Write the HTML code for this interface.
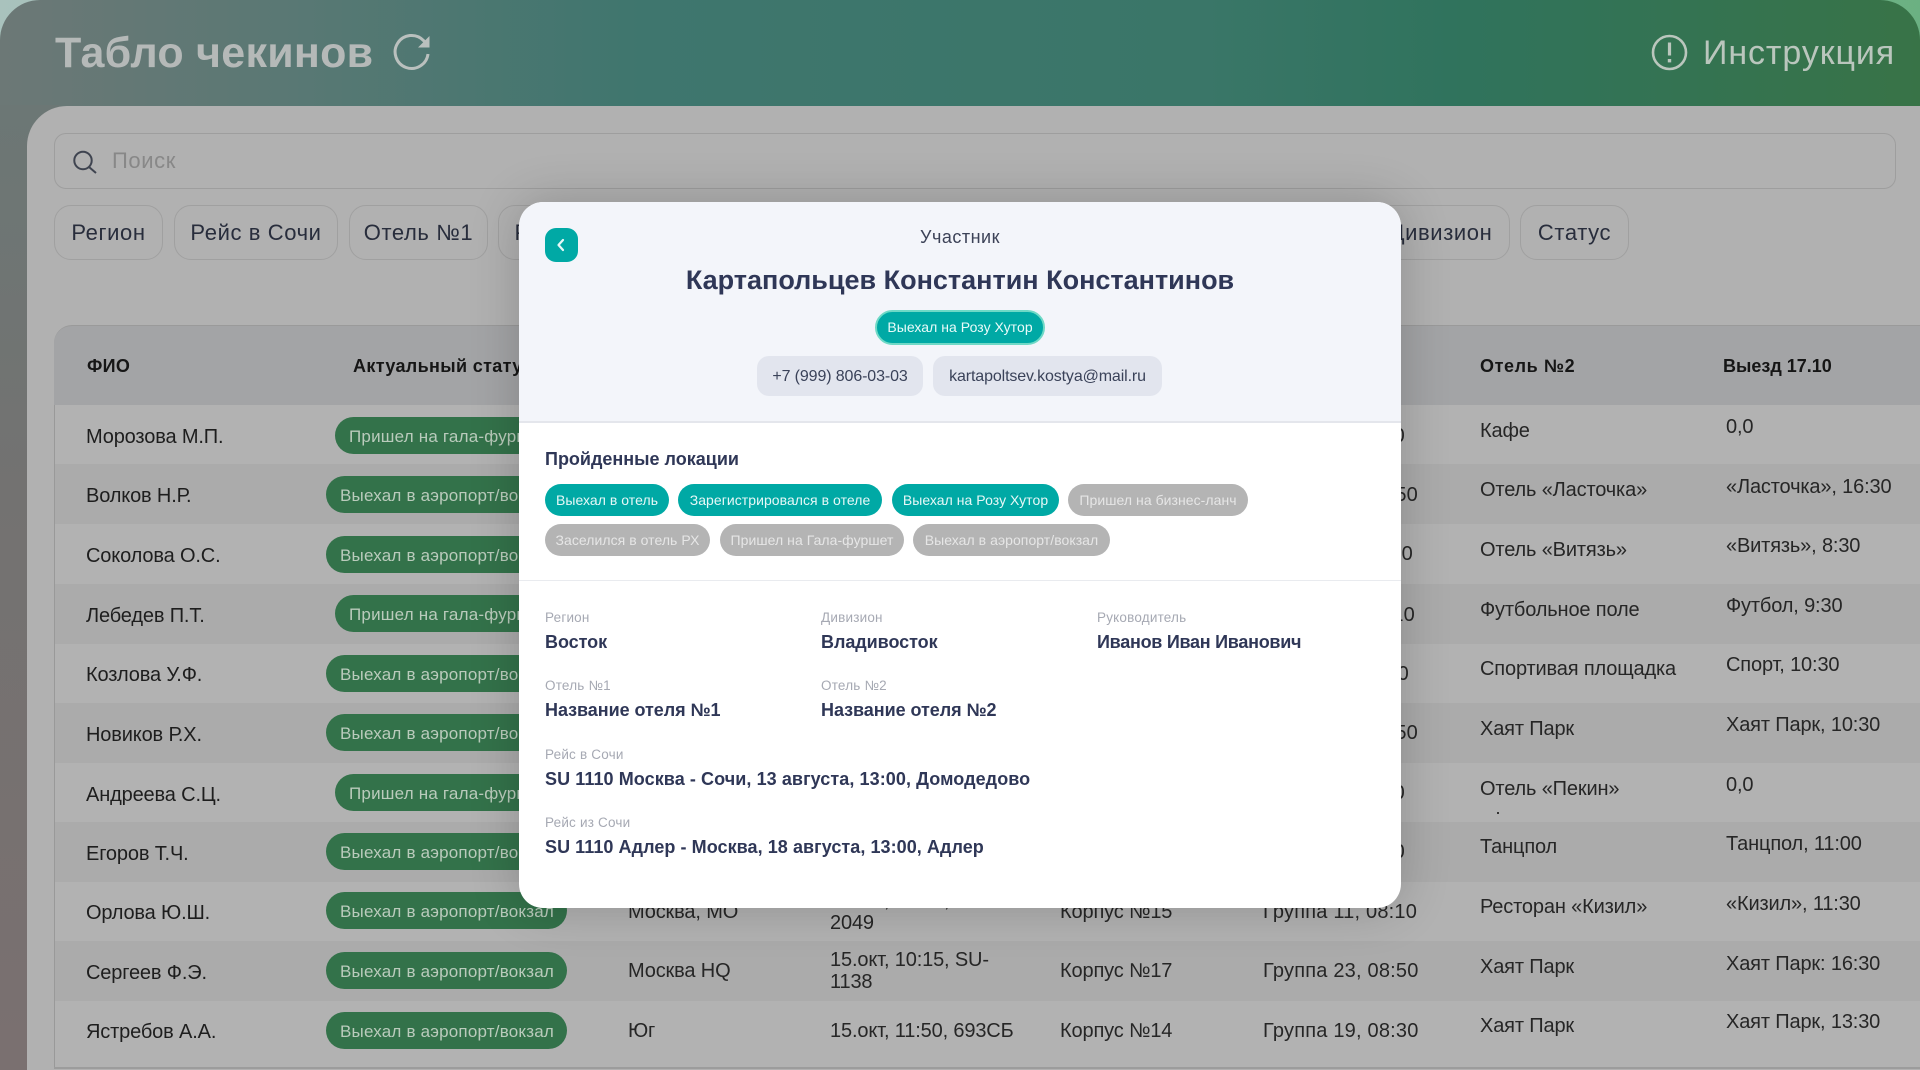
<!DOCTYPE html>
<html lang="ru"><head><meta charset="utf-8"><title>Табло чекинов</title>
<style>
html,body{margin:0;padding:0;width:1920px;height:1070px;overflow:hidden}
body{position:relative;font-family:"Liberation Sans","Noto Sans CJK SC",sans-serif;background:linear-gradient(100deg,#a9c2bd 0,#8fb5ad 30%,#66b07c 100%)}
div,span,svg{position:absolute}
.bgl{left:0;top:0;width:1920px;height:1070px;border-radius:40px 40px 0 0;background:linear-gradient(90deg,#6c7876 0,#5a7874 280px,#3f766e 640px,#3a7668 1200px,#30735d 1450px,#387347 1920px)}
.bgb{left:0;top:105px;width:60px;height:965px;background:linear-gradient(180deg,#6c7775 0,#737271 40%,#7a7070 100%)}
.panel{left:27px;top:106px;width:1893px;height:964px;background:#b1b1b1;border-radius:40px 0 0 0}
.title{left:55px;top:28px;font-size:43px;line-height:50px;font-weight:700;color:#b5b9b8;white-space:nowrap;letter-spacing:.25px}
.ins{left:1703px;top:32px;font-size:34px;line-height:42px;color:#bac6bd;white-space:nowrap;letter-spacing:.9px}
.search{left:54px;top:133px;width:1840px;height:54px;border:1px solid #9e9e9e;border-radius:12px}
.ph{left:112px;top:147px;font-size:22px;line-height:27px;color:#888;letter-spacing:.6px}
.f{top:205px;height:53px;border:1px solid #a0a0a0;border-radius:17px;box-sizing:content-box;font-size:22px;line-height:53px;color:#282d3c;text-align:center;white-space:nowrap;letter-spacing:.6px;overflow:hidden}
.th{left:54px;top:325px;width:1866px;height:81px;background:#a3a4a6;border-radius:18px 0 0 0;border-top:1px solid #9a9a9a;box-sizing:border-box}
.tl{left:54px;top:405px;width:1px;height:663px;background:#999}
.tb{left:54px;top:1067px;width:1866px;height:2px;background:#9c9c9c}
.r{left:55px;width:1865px;height:60px;background:#ababab}
.o2{background:#b2b2b2}
.b{font-size:18px;line-height:22px;font-weight:700;color:#161616;top:355px;white-space:nowrap}
.n,.c{font-size:20px;line-height:24px;color:#1e1e1e;white-space:nowrap;letter-spacing:-.15px}
.c{color:#262626}
.gp{letter-spacing:.2px}
.p{height:37px;border-radius:19px;background:#33724a;color:#bacbbc;font-size:17px;line-height:39px;white-space:nowrap;letter-spacing:.2px;overflow:hidden}
.a{left:326px;width:241px;padding-left:14px;box-sizing:border-box}
.g{left:335px;width:232px;padding-left:14px;box-sizing:border-box}
.ge{text-align:right;width:300px}
.m{left:519px;top:202px;width:882px;height:706px;background:#fff;border-radius:24px;box-shadow:0 0 50px rgba(0,0,0,.2);overflow:hidden}
.mt{left:0;top:0;width:882px;height:219px;background:#f3f5fa;border-bottom:2px solid #e4e6ec}
.ml{left:0;top:378px;width:882px;height:1px;background:#e9ebef}
.back{left:26px;top:26px;width:33px;height:34px;border-radius:11px;background:#00a9a5}
.u{left:0;width:882px;text-align:center;top:24px;font-size:18px;line-height:22px;color:#3c4257;letter-spacing:.5px}
.nm{left:0;width:882px;text-align:center;top:60px;font-size:27px;line-height:36px;font-weight:700;color:#2f3757;white-space:nowrap}
.st{left:356px;top:108px;width:170px;height:35px;box-sizing:border-box;border:2px solid #6fd9c6;border-radius:18px;background:#00a9a5;color:#e8fbf9;font-size:14px;line-height:31px;text-align:center;white-space:nowrap;letter-spacing:.05px}
.ct{top:154px;height:40px;border-radius:12px;background:#e2e5ee;color:#3a4259;font-size:16px;line-height:42px;text-align:center;white-space:nowrap;letter-spacing:-.12px}
.h{left:26px;top:246px;font-size:18px;line-height:22px;font-weight:700;color:#2f3757;white-space:nowrap}
.ch{height:32px;border-radius:16px;font-size:14px;line-height:32px;text-align:center;color:#e6f8f7;background:#00a9a5;white-space:nowrap;letter-spacing:.05px}
.ch.o{background:#b4b4b4;color:#e6e6e6}
.lb{font-size:13.5px;line-height:16px;color:#a6a9b3;white-space:nowrap;letter-spacing:.2px}
.v{font-size:18px;line-height:22px;font-weight:700;color:#2f3757;white-space:nowrap;letter-spacing:-.05px}
</style></head><body>
<div class="bgl"></div><div class="bgb"></div>
<div class="title">Табло чекинов</div>
<svg style="left:392px;top:33px" width="40" height="38" viewBox="0 0 40 38" fill="none"><path d="M36 21a16.5 16.5 0 1 1-4.6-13.6L36 12" stroke="#bac0be" stroke-width="3"/><path d="M37.5 3v11.5H26z" fill="#bac0be"/></svg>
<svg style="left:1651px;top:34px" width="37" height="37" viewBox="0 0 37 37" fill="none"><circle cx="18.5" cy="18.5" r="16.5" stroke="#bac6bd" stroke-width="2.6"/><path d="M18.5 8.5v13" stroke="#bac6bd" stroke-width="3.2"/><path d="M18.5 25v3.4" stroke="#bac6bd" stroke-width="3.4"/></svg>
<div class="ins">Инструкция</div>
<div class="panel"></div>
<div class="search"></div>
<svg style="left:72px;top:150px" width="26" height="24" viewBox="0 0 26 24" fill="none"><circle cx="11" cy="10.5" r="8.7" stroke="#3f4450" stroke-width="2"/><path d="M17 17l7 6" stroke="#3f4450" stroke-width="2"/></svg>
<div class="ph">Поиск</div>
<div class="f" style="left:54px;width:107px">Регион</div>
<div class="f" style="left:174px;width:162px">Рейс в Сочи</div>
<div class="f" style="left:349px;width:137px">Отель №1</div>
<div class="f" style="left:498px;width:180px">Руководитель</div>
<div class="f" style="left:1372px;width:136px">Дивизион</div>
<div class="f" style="left:1520px;width:107px">Статус</div>
<div class="th"></div>
<div class="r o2" style="top:405px"></div>
<div class="r" style="top:464px"></div>
<div class="r o2" style="top:524px"></div>
<div class="r" style="top:584px"></div>
<div class="r o2" style="top:644px"></div>
<div class="r" style="top:703px"></div>
<div class="r o2" style="top:763px"></div>
<div class="r" style="top:822px"></div>
<div class="r o2" style="top:882px"></div>
<div class="r" style="top:941px"></div>
<div class="r o2" style="top:1001px;height:66px"></div>
<div class="tl"></div><div class="tb"></div>
<div class="b" style="left:87px;letter-spacing:.3px">ФИО</div>
<div class="b" style="left:353px;letter-spacing:.35px">Актуальный статус</div>
<div class="b" style="left:1480px;letter-spacing:.6px">Отель №2</div>
<div class="b" style="left:1723px">Выезд 17.10</div>

<div class="n" style="left:86px;top:425px">Морозова М.П.</div>
<div class="n" style="left:86px;top:484px">Волков Н.Р.</div>
<div class="n" style="left:86px;top:544px">Соколова О.С.</div>
<div class="n" style="left:86px;top:604px">Лебедев П.Т.</div>
<div class="n" style="left:86px;top:663px">Козлова У.Ф.</div>
<div class="n" style="left:86px;top:723px">Новиков Р.Х.</div>
<div class="n" style="left:86px;top:783px">Андреева С.Ц.</div>
<div class="n" style="left:86px;top:842px">Егоров Т.Ч.</div>
<div class="n" style="left:86px;top:901px">Орлова Ю.Ш.</div>
<div class="n" style="left:86px;top:961px">Сергеев Ф.Э.</div>
<div class="n" style="left:86px;top:1020px">Ястребов А.А.</div>

<div class="p g" style="top:417px">Пришел на гала-фуршет</div>
<div class="p a" style="top:476px">Выехал в аэропорт/вокзал</div>
<div class="p a" style="top:536px">Выехал в аэропорт/вокзал</div>
<div class="p g" style="top:595px">Пришел на гала-фуршет</div>
<div class="p a" style="top:655px">Выехал в аэропорт/вокзал</div>
<div class="p a" style="top:714px">Выехал в аэропорт/вокзал</div>
<div class="p g" style="top:774px">Пришел на гала-фуршет</div>
<div class="p a" style="top:833px">Выехал в аэропорт/вокзал</div>
<div class="p a" style="top:892px">Выехал в аэропорт/вокзал</div>
<div class="p a" style="top:952px">Выехал в аэропорт/вокзал</div>
<div class="p a" style="top:1012px">Выехал в аэропорт/вокзал</div>

<div class="c" style="left:628px;top:900px">Москва, МО</div>
<div class="c" style="left:628px;top:959px">Москва HQ</div>
<div class="c" style="left:628px;top:1019px">Юг</div>
<div class="c" style="left:830px;top:889px">15.окт, 09:40, SU-</div>
<div class="c" style="left:830px;top:911px">2049</div>
<div class="c" style="left:830px;top:948px">15.окт, 10:15, SU-</div>
<div class="c" style="left:830px;top:970px">1138</div>
<div class="c" style="left:830px;top:1019px">15.окт, 11:50, 693СБ</div>
<div class="c" style="left:1060px;top:900px">Корпус №15</div>
<div class="c" style="left:1060px;top:959px">Корпус №17</div>
<div class="c" style="left:1060px;top:1019px">Корпус №14</div>
<div class="c ge gp" style="left:1105px;top:424px">Группа 11, 08:10</div>
<div class="c ge gp" style="left:1118px;top:483px">Группа 23, 08:50</div>
<div class="c ge gp" style="left:1113px;top:542px">Группа 14, 08:10</div>
<div class="c ge gp" style="left:1115px;top:603px">Группа 20, 08:10</div>
<div class="c ge gp" style="left:1109px;top:662px">Группа 12, 08:10</div>
<div class="c ge gp" style="left:1118px;top:721px">Группа 23, 08:50</div>
<div class="c ge gp" style="left:1105px;top:781px">Группа 11, 08:10</div>
<div class="c ge gp" style="left:1105px;top:840px">Группа 11, 08:10</div>
<div class="c gp" style="left:1263px;top:900px">Группа 11, 08:10</div>
<div class="c gp" style="left:1263px;top:959px">Группа 23, 08:50</div>
<div class="c gp" style="left:1263px;top:1019px">Группа 19, 08:30</div>

<div class="c" style="left:1480px;top:419px">Кафе</div>
<div class="c" style="left:1480px;top:478px">Отель «Ласточка»</div>
<div class="c" style="left:1480px;top:538px">Отель «Витязь»</div>
<div class="c" style="left:1480px;top:598px">Футбольное поле</div>
<div class="c" style="left:1480px;top:657px">Спортивая площадка</div>
<div class="c" style="left:1480px;top:717px">Хаят Парк</div>
<div class="c" style="left:1480px;top:777px">Отель «Пекин»</div>
<div class="c" style="left:1497px;top:812px;width:2px;height:2px;background:#333"></div>
<div class="c" style="left:1480px;top:835px">Танцпол</div>
<div class="c" style="left:1480px;top:895px">Ресторан «Кизил»</div>
<div class="c" style="left:1480px;top:955px">Хаят Парк</div>
<div class="c" style="left:1480px;top:1014px">Хаят Парк</div>

<div class="c" style="left:1726px;top:415px">0,0</div>
<div class="c" style="left:1726px;top:475px">«Ласточка», 16:30</div>
<div class="c" style="left:1726px;top:534px">«Витязь», 8:30</div>
<div class="c" style="left:1726px;top:594px">Футбол, 9:30</div>
<div class="c" style="left:1726px;top:653px">Спорт, 10:30</div>
<div class="c" style="left:1726px;top:713px">Хаят Парк, 10:30</div>
<div class="c" style="left:1726px;top:773px">0,0</div>
<div class="c" style="left:1726px;top:832px">Танцпол, 11:00</div>
<div class="c" style="left:1726px;top:892px">«Кизил», 11:30</div>
<div class="c" style="left:1726px;top:952px">Хаят Парк: 16:30</div>
<div class="c" style="left:1726px;top:1010px">Хаят Парк, 13:30</div>

<div class="m">
<div class="mt"></div>
<div class="ml"></div>
<div class="back"><svg style="left:10px;top:10px" width="11" height="14" viewBox="0 0 11 14" fill="none"><path d="M8 2L3.5 7 8 12" stroke="#e6f8f7" stroke-width="2.2" stroke-linecap="round" stroke-linejoin="round"/></svg></div>
<div class="u">Участник</div>
<div class="nm">Картапольцев Константин Константинов</div>
<div class="st">Выехал на Розу Хутор</div>
<div class="ct" style="left:238px;width:166px">+7 (999) 806-03-03</div>
<div class="ct" style="left:414px;width:229px">kartapoltsev.kostya@mail.ru</div>
<div class="h">Пройденные локации</div>
<div class="ch" style="left:26px;top:282px;width:124px">Выехал в отель</div>
<div class="ch" style="left:159px;top:282px;width:204px">Зарегистрировался в отеле</div>
<div class="ch" style="left:373px;top:282px;width:167px">Выехал на Розу Хутор</div>
<div class="ch o" style="left:549px;top:282px;width:180px">Пришел на бизнес-ланч</div>
<div class="ch o" style="left:26px;top:322px;width:165px">Заселился в отель РХ</div>
<div class="ch o" style="left:201px;top:322px;width:184px">Пришел на Гала-фуршет</div>
<div class="ch o" style="left:394px;top:322px;width:197px">Выехал в аэропорт/вокзал</div>
<div class="lb" style="left:26px;top:408px">Регион</div>
<div class="v" style="left:26px;top:429px">Восток</div>
<div class="lb" style="left:302px;top:408px">Дивизион</div>
<div class="v" style="left:302px;top:429px">Владивосток</div>
<div class="lb" style="left:578px;top:408px">Руководитель</div>
<div class="v" style="left:578px;top:429px;letter-spacing:-.27px">Иванов Иван Иванович</div>
<div class="lb" style="left:26px;top:476px">Отель №1</div>
<div class="v" style="left:26px;top:497px">Название отеля №1</div>
<div class="lb" style="left:302px;top:476px">Отель №2</div>
<div class="v" style="left:302px;top:497px">Название отеля №2</div>
<div class="lb" style="left:26px;top:545px">Рейс в Сочи</div>
<div class="v" style="left:26px;top:566px;letter-spacing:.08px">SU 1110 Москва - Сочи, 13 августа, 13:00, Домодедово</div>
<div class="lb" style="left:26px;top:613px">Рейс из Сочи</div>
<div class="v" style="left:26px;top:634px;letter-spacing:.06px">SU 1110 Адлер - Москва, 18 августа, 13:00, Адлер</div>
</div>
</body></html>
